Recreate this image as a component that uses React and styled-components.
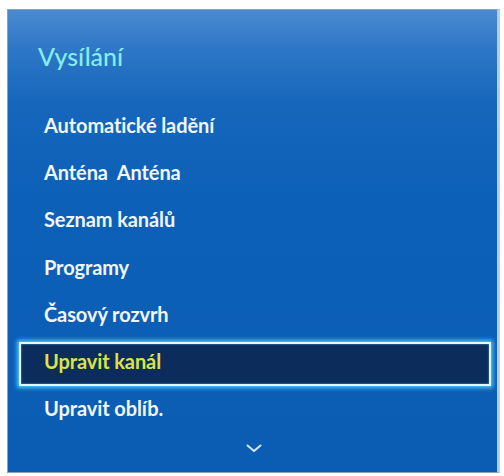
import React from "react";
import styled, { createGlobalStyle } from "styled-components";

const GlobalStyle = createGlobalStyle`
  html, body {
    margin: 0;
    padding: 0;
    background: #ffffff;
  }
  body {
    font-family: Lato, "Open Sans", "DejaVu Sans", sans-serif;
  }
`;

const Page = styled.div`
  width: 504px;
  height: 476px;
  padding: 9px 4px 3px 7px;
  box-sizing: border-box;
  background: #ffffff;
`;

const Panel = styled.div`
  height: 100%;
  box-sizing: border-box;
  display: flex;
  flex-direction: column;
  border: 1px solid #8aa3bd;
  border-right: 3px solid #b3cde6;
  background: linear-gradient(
    180deg,
    #4a8ad0 0%,
    #2c76c6 9%,
    #1667bc 20%,
    #0d60b7 40%,
    #0b5db4 100%
  );
`;

const Title = styled.h2`
  margin: 0;
  padding: 32px 0 0 30px;
  height: 96px;
  box-sizing: border-box;
  font-size: 25px;
  line-height: 28px;
  font-weight: 500;
  color: #86ecec;
`;

const List = styled.div`
  display: flex;
  flex-direction: column;
  gap: 3.2px;
  padding: 0 6px 0 11px;
`;

const Row = styled.div`
  height: 44px;
  box-sizing: border-box;
  display: flex;
  align-items: center;
  padding: 0 0 6px 23px;
  font-size: 20px;
  font-weight: 700;
  letter-spacing: -0.1px;
  white-space: pre;
  border: 2px solid transparent;
  color: ${(p) => (p.$active ? "#dde24a" : "#f2f6ff")};
  background: ${(p) => (p.$active ? "#0c2d5b" : "transparent")};
  border-color: ${(p) => (p.$active ? "#e6f8ff" : "transparent")};
  box-shadow: ${(p) =>
    p.$active ? "0 0 4px 2px #4fc6ff, inset 0 0 2px #4fb8ff" : "none"};
`;

const More = styled.div`
  display: flex;
  justify-content: center;
  padding-top: 11px;
  padding-left: 3px;
`;

const items = [
  "Automatické ladění",
  "Anténa  Anténa",
  "Seznam kanálů",
  "Programy",
  "Časový rozvrh",
  "Upravit kanál",
  "Upravit oblíb.",
];

export default function App() {
  return (
    <Page>
      <GlobalStyle />
      <Panel>
        <Title>Vysílání</Title>
        <List>
          {items.map((label, i) => (
            <Row key={label} $active={i === 5}>
              {label}
            </Row>
          ))}
        </List>
        <More>
          <svg width="16" height="9" viewBox="0 0 16 9">
            <path
              d="M1.5 1.5 L8 7 L14.5 1.5"
              fill="none"
              stroke="#d6e8ff"
              strokeWidth="2"
              strokeLinecap="round"
              strokeLinejoin="round"
            />
          </svg>
        </More>
      </Panel>
    </Page>
  );
}
